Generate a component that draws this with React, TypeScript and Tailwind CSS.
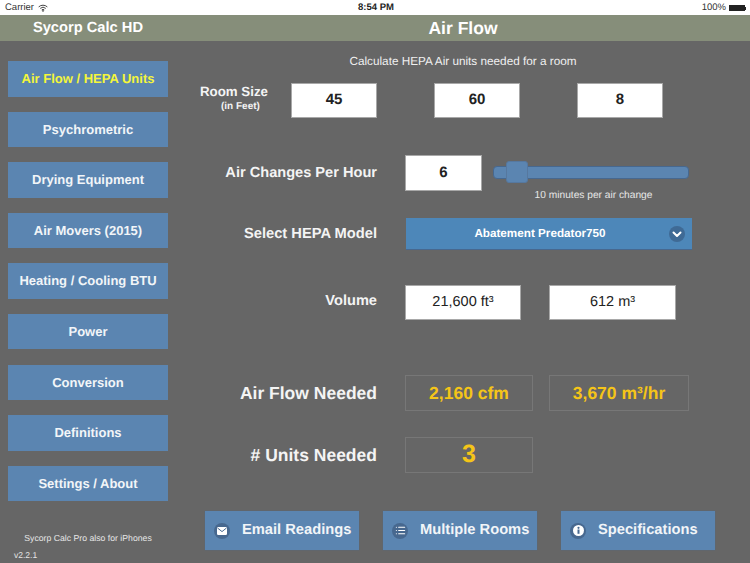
import { List } from 'lucide-react';
import type { ReactNode } from 'react';

const navItems = [
    'Air Flow / HEPA Units',
    'Psychrometric',
    'Drying Equipment',
    'Air Movers (2015)',
    'Heating / Cooling BTU',
    'Power',
    'Conversion',
    'Definitions',
    'Settings / About',
];

function WifiIcon() {
    return (
        <svg width="10" height="8" viewBox="0 0 12 9" className="ml-[4px]" fill="none" stroke="#333" strokeWidth="1.1">
            <path d="M0.8 3.2A7.6 7.6 0 0 1 11.2 3.2" />
            <path d="M2.7 5A4.8 4.8 0 0 1 9.3 5" />
            <path d="M4.5 6.8A2.2 2.2 0 0 1 7.5 6.8" />
            <circle cx="6" cy="8" r="0.5" fill="#333" />
        </svg>
    );
}

function MailIcon() {
    return (
        <svg width="10" height="8" viewBox="0 0 10 8">
            <rect x="0" y="0" width="10" height="8" rx="1.2" fill="#fff" />
            <path d="M0.5 1 5 4.6 9.5 1" stroke="#47688f" strokeWidth="1" fill="none" />
        </svg>
    );
}

function InfoIcon() {
    return (
        <svg width="11" height="11" viewBox="0 0 11 11">
            <circle cx="5.5" cy="5.5" r="5.5" fill="#fff" />
            <circle cx="5.5" cy="2.8" r="1.1" fill="#47688f" />
            <rect x="4.5" y="4.5" width="2" height="4.3" fill="#47688f" />
        </svg>
    );
}

function StatusBar() {
    return (
        <div className="relative flex h-[15px] items-center justify-between bg-white pl-[5px] pr-[4px] pt-[1px] text-[9.5px] text-[#333]">
            <div className="flex items-center">
                Carrier
                <WifiIcon />
            </div>
            <div className="absolute left-[358px] top-0 text-[9.5px] font-bold leading-[15px] text-[#222]">8:54 PM</div>
            <div className="flex items-center">
                100%
                <div className="ml-[3px] h-[6px] w-[16px] bg-[#222]" />
                <div className="h-[3px] w-[1px] bg-[#222]" />
            </div>
        </div>
    );
}

function ValueBox({ width, children, bold }: { width: string; children: ReactNode; bold?: boolean }) {
    return (
        <div className={`${width} flex h-[35px] items-center justify-center border border-[#a8a8a8] bg-white text-[#222] ${bold ? 'text-[15px] font-bold' : 'text-[14.5px]'}`}>
            {children}
        </div>
    );
}

function ResultBox({ width, children, large }: { width: string; children: ReactNode; large?: boolean }) {
    return (
        <div className={`${width} flex h-[36px] items-center justify-center border border-[#777777] font-bold text-[#f5c518] ${large ? 'text-[25px]' : 'text-[17.5px]'}`}>
            {children}
        </div>
    );
}

function ActionButton({ icon, label }: { icon: ReactNode; label: string }) {
    return (
        <div className="flex h-[39px] w-[154px] items-center bg-[#5b85b1] pl-[9px] shadow-[0_0_1px_#4a6d95]">
            <div className="flex h-[16px] w-[16px] items-center justify-center rounded-full bg-[#47688f] text-white">{icon}</div>
            <span className="ml-[12px] whitespace-nowrap text-[14.7px] font-bold text-[#f2f5f8]">{label}</span>
        </div>
    );
}

export default function App() {
    return (
        <div className="flex h-[563px] w-[750px] flex-col overflow-hidden bg-[#666666] font-['Liberation_Sans',Arial,sans-serif] [text-rendering:geometricPrecision]">
            <StatusBar />

            {/* Title bar */}
            <div className="flex h-[26px] items-center bg-[#868e7a] pt-[1px] font-bold text-white">
                <div className="w-[176px] text-center text-[14.7px]">Sycorp Calc HD</div>
                <div className="flex-1 text-center text-[17.5px]">Air Flow</div>
            </div>

            <div className="flex flex-1">
                {/* Sidebar */}
                <div className="flex w-[176px] flex-col pl-[8px] pt-[20px]">
                    <div className="flex flex-col gap-[15.1px]">
                        {navItems.map((item, i) => (
                            <div
                                key={item}
                                className={`flex h-[35.5px] w-[160px] items-center justify-center bg-[#5b85b1] text-[13px] font-bold ${i === 0 ? 'text-[#f4f63a]' : 'text-[#f2f5f8]'}`}
                            >
                                {item}
                            </div>
                        ))}
                    </div>
                    <div className="mt-[32px] w-[160px] text-center text-[8.7px] leading-[11px] text-[#e6e6e6]">Sycorp Calc Pro also for iPhones</div>
                    <div className="ml-[6px] mt-[6px] text-[8.5px] leading-[11px] text-[#e6e6e6]">v2.2.1</div>
                </div>

                {/* Main */}
                <div className="flex flex-1 flex-col">
                    <div className="mt-[14px] text-center text-[11.75px] leading-[14px] text-[#f0f0f0]">Calculate HEPA Air units needed for a room</div>

                    <div className="mt-[14px] flex items-start pl-[24px]">
                        <div className="w-[91px] pt-[1px] font-bold text-[#f4f4f4]">
                            <div className="text-[13.3px] leading-[15px]">Room Size</div>
                            <div className="pl-[21px] text-[10px] leading-[15px]">(in Feet)</div>
                        </div>
                        <div className="flex gap-[57px]">
                            <ValueBox width="w-[86px]" bold>45</ValueBox>
                            <ValueBox width="w-[86px]" bold>60</ValueBox>
                            <ValueBox width="w-[86px]" bold>8</ValueBox>
                        </div>
                    </div>

                    <div className="mt-[37px] flex items-start">
                        <div className="w-[201px] pt-[9px] text-right text-[14.6px] font-bold leading-[18px] text-[#f4f4f4]">Air Changes Per Hour</div>
                        <div className="ml-[28px] flex h-[36px] w-[77px] items-center justify-center border border-[#a8a8a8] bg-white text-[15px] font-bold text-[#222]">6</div>
                        <div className="ml-[11px] flex w-[196px] flex-col items-center">
                            <div className="relative mt-[11px] h-[13px] w-full rounded-[4px] border border-[#47688f] bg-[#5b85b1]">
                                <div className="absolute left-[12px] top-[-6px] h-[22px] w-[22px] rounded-[3px] border border-[#56789f] bg-[#5b85b1]" />
                            </div>
                            <div className="mt-[11px] pl-[5px] text-[10.2px] leading-[12px] text-[#e6e6e6]">10 minutes per air change</div>
                        </div>
                    </div>

                    <div className="mt-[16px] flex items-center">
                        <div className="w-[201px] text-right text-[14.7px] font-bold text-[#f4f4f4]">Select HEPA Model</div>
                        <div className="relative ml-[29px] flex h-[32px] w-[286px] items-center justify-center border-b border-[#47688f] bg-[#4d87b9] pr-[18px] text-[11.7px] font-bold text-white">
                            Abatement Predator750
                            <div className="absolute right-[7px] top-[8px] flex h-[16px] w-[16px] items-center justify-center rounded-full bg-[#3f6a95]">
                                <svg width="10" height="7" viewBox="0 0 10 7">
                                    <path d="M1.5 1.5 5 5 8.5 1.5" stroke="#fff" strokeWidth="2" fill="none" strokeLinecap="round" strokeLinejoin="round" />
                                </svg>
                            </div>
                        </div>
                    </div>

                    <div className="mt-[35px] flex items-start">
                        <div className="w-[201px] pt-[7px] text-right text-[14.6px] font-bold leading-[18px] text-[#f4f4f4]">Volume</div>
                        <div className="ml-[28px] flex gap-[28px]">
                            <ValueBox width="w-[116px]">21,600 ft³</ValueBox>
                            <ValueBox width="w-[127px]">612 m³</ValueBox>
                        </div>
                    </div>

                    <div className="mt-[55px] flex items-center">
                        <div className="w-[201px] text-right text-[17.5px] font-bold text-[#f4f4f4]">Air Flow Needed</div>
                        <div className="ml-[28px] flex gap-[16px]">
                            <ResultBox width="w-[128px]">2,160 cfm</ResultBox>
                            <ResultBox width="w-[140px]">3,670 m³/hr</ResultBox>
                        </div>
                    </div>

                    <div className="mt-[26px] flex items-center">
                        <div className="w-[201px] text-right text-[17.5px] font-bold text-[#f4f4f4]">
                            # Units Needed
                        </div>
                        <div className="ml-[28px]">
                            <ResultBox width="w-[128px]" large>3</ResultBox>
                        </div>
                    </div>

                    {/* Bottom buttons */}
                    <div className="ml-[29px] mt-[38px] flex gap-[24px]">
                        <ActionButton icon={<MailIcon />} label="Email Readings" />
                        <ActionButton icon={<List size={11} strokeWidth={2.5} />} label="Multiple Rooms" />
                        <ActionButton icon={<InfoIcon />} label="Specifications" />
                    </div>
                </div>
            </div>
        </div>
    );
}
